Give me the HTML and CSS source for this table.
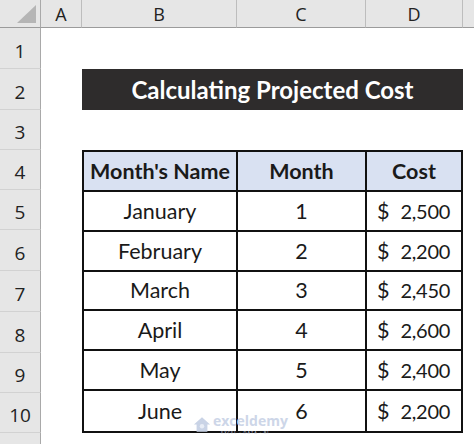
FILE: index.html
```html
<!DOCTYPE html>
<html>
<head>
<meta charset="utf-8">
<link rel="stylesheet" href="styles.css">
</head>
<body>
<div class="sheet">
  <div class="corner"><svg width="41" height="28" viewBox="0 0 41 28"><polygon points="17,23 36,23 36,5" fill="#b5b5b5"/></svg></div>
  <div class="colhead">A</div>
  <div class="colhead">B</div>
  <div class="colhead">C</div>
  <div class="colhead">D</div>
  <div class="colhead last"></div>

  <div class="rowhead">1</div>
  <div class="cell span5"></div>

  <div class="rowhead">2</div>
  <div class="cell"></div>
  <div class="title">Calculating Projected Cost</div>
  <div class="cell"></div>

  <div class="rowhead">3</div>
  <div class="cell span5"></div>

  <div class="rowhead">4</div>
  <div class="cell"></div>
  <div class="table">
    <div class="th">Month's Name</div><div class="th">Month</div><div class="th">Cost</div>
    <div class="td">January</div><div class="td">1</div><div class="td money"><span>$</span><span>2,500</span></div>
    <div class="td">February</div><div class="td">2</div><div class="td money"><span>$</span><span>2,200</span></div>
    <div class="td">March</div><div class="td">3</div><div class="td money"><span>$</span><span>2,450</span></div>
    <div class="td">April</div><div class="td">4</div><div class="td money"><span>$</span><span>2,600</span></div>
    <div class="td">May</div><div class="td">5</div><div class="td money"><span>$</span><span>2,400</span></div>
    <div class="td">June</div><div class="td">6</div><div class="td money"><span>$</span><span>2,200</span></div>
  </div>
  <div class="cell spanrows"></div>

  <div class="rowhead">5</div>
  <div class="rowhead">6</div>
  <div class="rowhead">7</div>
  <div class="rowhead">8</div>
  <div class="rowhead">9</div>
  <div class="rowhead">10</div>
  <div class="rowhead tail"></div>
</div>
<div class="watermark">
  <svg width="18" height="17" viewBox="0 0 20 18"><path d="M10 1 L19 9 L16 9 L16 17 L4 17 L4 9 L1 9 Z" fill="#c9d3e6"/><circle cx="10" cy="11" r="2.5" fill="#e8edf6"/></svg>
  <div class="wm-text"><span class="wm-name">exceldemy</span><span class="wm-sub">EXCEL · DATA · BI</span></div>
</div>
</body>
</html>
```
FILE: styles.css
```css
html, body {
  margin: 0;
  padding: 0;
  background: #ffffff;
}
.sheet {
  display: grid;
  grid-template-columns: 41px 41px 155px 129px 97px 11px;
  grid-template-rows: 28px 41px 41px 40px 40px 40px 41px 41px 41px 40px 40px 11px;
  width: 474px;
  font-family: Lato, "Open Sans", sans-serif;
}
.corner {
  background: #e6e6e6;
  border-right: 1px solid #a9a9a9;
  border-bottom: 1px solid #9b9b9b;
  box-sizing: border-box;
}
.corner svg { display: block; }
.colhead {
  background: #e6e6e6;
  border-right: 1px solid #bdbdbd;
  border-bottom: 1px solid #9b9b9b;
  box-sizing: border-box;
  display: flex;
  align-items: center;
  justify-content: center;
  font-family: "Open Sans", sans-serif;
  font-size: 18px;
  color: #222;
}
.colhead.last { border-right: none; }
.rowhead {
  grid-column: 1;
  background: #e6e6e6;
  border-right: 1px solid #a9a9a9;
  border-bottom: 1px solid #d2d2d2;
  box-sizing: border-box;
  display: flex;
  align-items: flex-end;
  justify-content: center;
  padding-bottom: 4px;
  font-family: "Open Sans", sans-serif;
  font-size: 19px;
  color: #222;
}
.rowhead.tail { border-bottom: none; padding: 0; }
.cell { background: #fff; }
.span5 { grid-column: 2 / 7; }
.title {
  grid-column: 3 / 6;
  background: #2e2c2c;
  color: #ffffff;
  font-weight: 700;
  font-size: 24px;
  display: flex;
  align-items: center;
  justify-content: center;
}
.table {
  grid-column: 3 / 6;
  grid-row: 5 / 12;
  display: grid;
  grid-template-columns: 154px 129px 1fr;
  grid-template-rows: repeat(7, 1fr);
  border: 2px solid #111;
  box-sizing: border-box;
}
.spanrows { grid-column: 6; grid-row: 5 / 13; }
.th, .td {
  border-right: 2px solid #111;
  border-bottom: 2px solid #111;
  display: flex;
  align-items: center;
  justify-content: center;
  font-size: 21.5px;
  color: #1a1a1a;
}
.th:nth-child(3n), .td:nth-child(3n) { border-right: none; }
.td:nth-last-child(-n+3) { border-bottom: none; }
.th {
  background: #d9e1f2;
  font-weight: 700;
}
.money {
  justify-content: space-between;
  padding: 0 11px 0 10px;
}
.money span:last-child {
  font-size: 20px;
  letter-spacing: -0.3px;
}
.watermark {
  position: absolute;
  left: 193px;
  top: 413px;
  display: flex;
  align-items: center;
  gap: 2px;
}
.watermark svg { display: block; }
.wm-text {
  display: flex;
  flex-direction: column;
  line-height: 1;
  gap: 3px;
}
.wm-name {
  font-family: "Open Sans", sans-serif;
  font-weight: 700;
  font-size: 14px;
  line-height: 15px;
  color: #cdd6e8;
}
.wm-sub {
  font-family: "Open Sans", sans-serif;
  font-size: 4px;
  line-height: 4px;
  color: #d2d8e4;
  letter-spacing: 1px;
  margin-left: 8px;
}
```
